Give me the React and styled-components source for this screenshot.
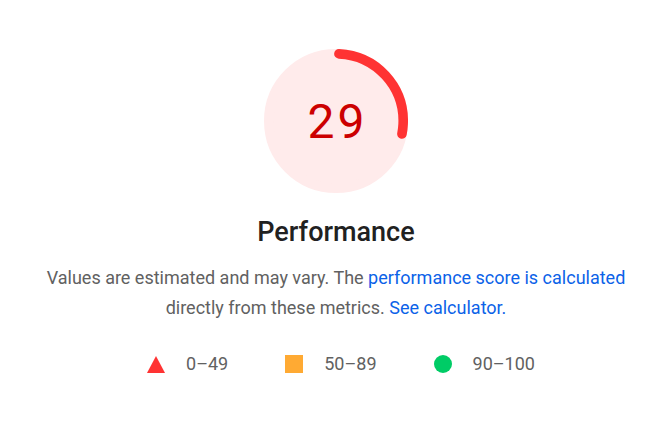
import React from "react";
import styled, { createGlobalStyle } from "styled-components";

const Global = createGlobalStyle`
  html, body { margin: 0; padding: 0; background: #ffffff; }
  body { font-family: Roboto, "Liberation Sans", Arial, sans-serif; }
`;

const Page = styled.div`
  width: 672px;
  height: 436px;
  display: flex;
  flex-direction: column;
  align-items: center;
  padding-top: 49px;
  box-sizing: border-box;
`;

const GaugeWrap = styled.div`
  position: relative;
  width: 144px;
  height: 144px;
`;

const GaugeSvg = styled.svg`
  display: block;
  width: 144px;
  height: 144px;
`;

const Score = styled.div`
  position: absolute;
  inset: 0;
  display: flex;
  align-items: center;
  justify-content: center;
  font-size: 48px;
  letter-spacing: 3px;
  color: #cc0000;
  font-weight: 400;
  padding-left: 3px;
`;

const Title = styled.div`
  margin-top: 21px;
  font-size: 27px;
  line-height: 36px;
  color: #212121;
  font-weight: 500;
`;

const Desc = styled.p`
  margin: 13px 0 0;
  width: 600px;
  text-align: center;
  font-size: 18px;
  line-height: 30px;
  color: #616161;
`;

const Link = styled.a`
  color: #0b62e8;
  text-decoration: none;
`;

const Legend = styled.div`
  margin-top: 29px;
  margin-left: 10px;
  display: flex;
  align-items: center;
  gap: 57px;
`;

const LegendItem = styled.div`
  display: flex;
  align-items: center;
  gap: 21px;
  font-size: 18px;
  line-height: 24px;
  color: #616161;
`;

const Shape = styled.span`
  display: inline-block;
  width: 18px;
  height: 18px;
  background: ${(p) => p.$color};
  border-radius: ${(p) => (p.$round ? "50%" : "0")};
`;

const Tri = styled.span`
  display: inline-block;
  width: 0;
  height: 0;
  border-left: 9px solid transparent;
  border-right: 9px solid transparent;
  border-bottom: 17px solid #ff3333;
`;

export default function App() {
  return (
    <>
      <Global />
      <Page>
        <GaugeWrap>
          <GaugeSvg viewBox="0 0 120 120">
            <circle cx="60" cy="60" r="56" fill="#ffebeb" stroke="#ffebeb" strokeWidth="8" />
            <circle
              cx="60"
              cy="60"
              r="56"
              fill="none"
              stroke="#ff3333"
              strokeWidth="8"
              strokeLinecap="round"
              strokeDasharray="96.3 351.86"
              transform="rotate(-87.5 60 60)"
            />
          </GaugeSvg>
          <Score>29</Score>
        </GaugeWrap>
        <Title>Performance</Title>
        <Desc>
          Values are estimated and may vary. The{" "}
          <Link href="#">performance score is calculated</Link> directly from these metrics.{" "}
          <Link href="#">See calculator.</Link>
        </Desc>
        <Legend>
          <LegendItem>
            <Tri />
            <span>0–49</span>
          </LegendItem>
          <LegendItem>
            <Shape $color="#ffaa33" />
            <span>50–89</span>
          </LegendItem>
          <LegendItem>
            <Shape $color="#00cc66" $round />
            <span>90–100</span>
          </LegendItem>
        </Legend>
      </Page>
    </>
  );
}
